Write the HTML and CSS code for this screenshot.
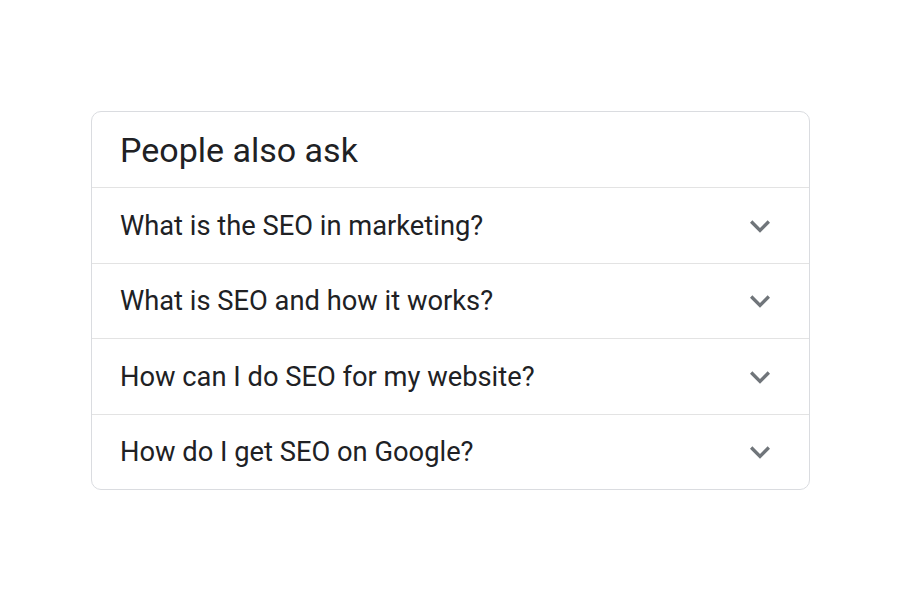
FILE: index.html
```html
<!DOCTYPE html>
<html>
  <head>
    <meta charset="UTF-8" />
    <title>People also ask</title>
    <link rel="stylesheet" href="styles.css">
  </head>
  <body>
    <div class="paa">
      <div class="paa-title">People also ask</div>
      <div class="paa-row">
        <span class="paa-q">What is the SEO in marketing?</span>
        <svg class="chev" viewBox="0 0 24 24"><path d="M16.59 8.59L12 13.17 7.41 8.59 6 10l6 6 6-6z"/></svg>
      </div>
      <div class="paa-row short">
        <span class="paa-q">What is SEO and how it works?</span>
        <svg class="chev" viewBox="0 0 24 24"><path d="M16.59 8.59L12 13.17 7.41 8.59 6 10l6 6 6-6z"/></svg>
      </div>
      <div class="paa-row">
        <span class="paa-q">How can I do SEO for my website?</span>
        <svg class="chev" viewBox="0 0 24 24"><path d="M16.59 8.59L12 13.17 7.41 8.59 6 10l6 6 6-6z"/></svg>
      </div>
      <div class="paa-row short">
        <span class="paa-q">How do I get SEO on Google?</span>
        <svg class="chev" viewBox="0 0 24 24"><path d="M16.59 8.59L12 13.17 7.41 8.59 6 10l6 6 6-6z"/></svg>
      </div>
    </div>
  </body>
</html>
```

FILE: styles.css
```css
body {
  margin: 0;
  background-color: #fff;
  font-family: Roboto, "Liberation Sans", Arial, sans-serif;
  color: #202124;
}
.paa {
  width: 717px;
  margin: 111px 0 0 91px;
  border: 1px solid #dadce0;
  border-radius: 10px;
}
.paa-title {
  height: 75px;
  display: flex;
  align-items: center;
  padding-left: 28px;
  font-size: 34px;
  border-bottom: 1px solid #e3e3e3;
}
.paa-row {
  height: 75px;
  display: flex;
  align-items: center;
  justify-content: space-between;
  padding: 0 29px 0 28px;
  font-size: 27.3px;
  border-bottom: 1px solid #e3e3e3;
}
.paa-row.short {
  height: 74px;
}
.paa-row:last-child {
  border-bottom: none;
}
.chev {
  width: 40px;
  height: 40px;
  fill: #70757a;
}
```
